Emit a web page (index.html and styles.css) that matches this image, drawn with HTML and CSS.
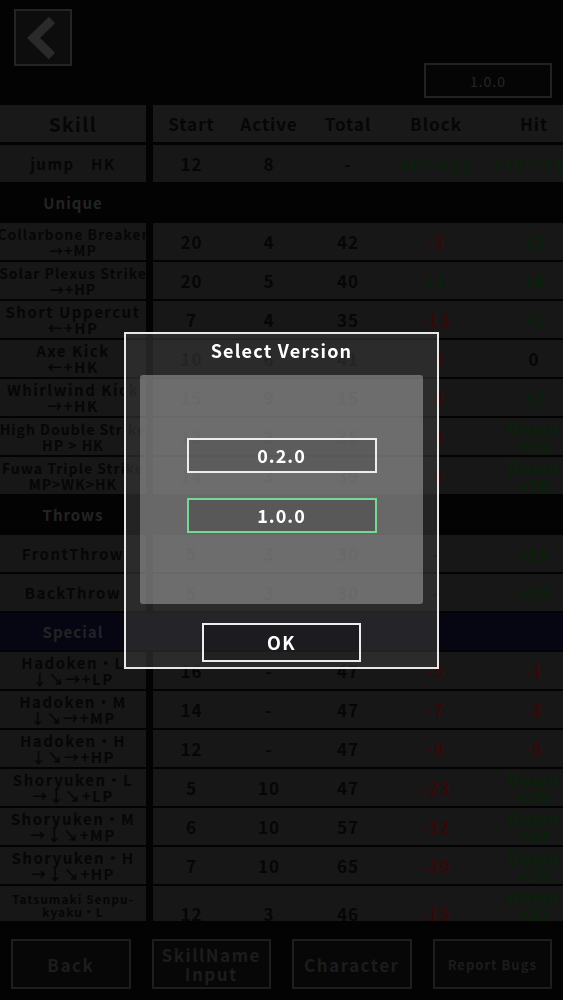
FILE: index.html
```html
<!DOCTYPE html>
<html lang="en">
<head>
<meta charset="utf-8">
<title>Frame Data</title>
<link rel="stylesheet" href="styles.css">
</head>
<body>
<div class="page">
  <header class="topbar">
    <button class="back-btn" aria-label="Back">
      <svg width="54" height="53" viewBox="0 0 54 53"><polyline points="36,9 17.5,27 36,45" fill="none" stroke="#2a2a2a" stroke-width="9" stroke-linejoin="miter"/></svg>
    </button>
    <div class="version-box">1.0.0</div>
  </header>

  <div class="table">
    <div class="row head-row">
      <div class="skill head">Skill</div>
      <div class="stats head"><span>Start</span><span>Active</span><span>Total</span><span>Block</span><span>Hit</span></div>
    </div>

    <div class="body">
      <div class="row">
        <div class="skill"><span>jump　HK</span></div>
        <div class="stats"><span>12</span><span>8</span><span>-</span><span class="g">+6～+11</span><span class="g">+10～+14</span></div>
      </div>

      <div class="section"><div class="label">Unique</div></div>

      <div class="row">
        <div class="skill sm"><span>Collarbone Breaker</span><span>→+MP</span></div>
        <div class="stats"><span>20</span><span>4</span><span>42</span><span class="r">-3</span><span class="g">+2</span></div>
      </div>
      <div class="row">
        <div class="skill sm"><span>Solar Plexus Strike</span><span>→+HP</span></div>
        <div class="stats"><span>20</span><span>5</span><span>40</span><span class="g">+1</span><span class="g">+8</span></div>
      </div>
      <div class="row">
        <div class="skill lg"><span>Short Uppercut</span><span>←+HP</span></div>
        <div class="stats"><span>7</span><span>4</span><span>35</span><span class="r">-13</span><span class="g">+1</span></div>
      </div>
      <div class="row">
        <div class="skill"><span>Axe Kick</span><span>←+HK</span></div>
        <div class="stats"><span>10</span><span>6</span><span>41</span><span class="r">-2</span><span>0</span></div>
      </div>
      <div class="row">
        <div class="skill"><span>Whirlwind Kick</span><span>→+HK</span></div>
        <div class="stats"><span>15</span><span>9</span><span>15</span><span class="r">-4</span><span class="g">+2</span></div>
      </div>
      <div class="row">
        <div class="skill sm"><span>High Double Strike</span><span>HP &gt; HK</span></div>
        <div class="stats"><span>12</span><span>3</span><span>35</span><span class="r">-4</span><span class="g">Down<br>+36</span></div>
      </div>
      <div class="row">
        <div class="skill sm"><span>Fuwa Triple Strike</span><span>MP&gt;WK&gt;HK</span></div>
        <div class="stats"><span>14</span><span>3</span><span>39</span><span class="r">-6</span><span class="g">Down<br>+36</span></div>
      </div>

      <div class="section"><div class="label">Throws</div></div>

      <div class="row">
        <div class="skill"><span>FrontThrow</span></div>
        <div class="stats"><span>5</span><span>3</span><span>30</span><span>-</span><span class="g">+19</span></div>
      </div>
      <div class="row">
        <div class="skill"><span>BackThrow</span></div>
        <div class="stats"><span>5</span><span>3</span><span>30</span><span>-</span><span class="g">+19</span></div>
      </div>

      <div class="section special"><div class="label">Special</div></div>

      <div class="row">
        <div class="skill"><span>Hadoken・L</span><span>↓↘→+LP</span></div>
        <div class="stats"><span>16</span><span>-</span><span>47</span><span class="r">-5</span><span class="r">-1</span></div>
      </div>
      <div class="row">
        <div class="skill"><span>Hadoken・M</span><span>↓↘→+MP</span></div>
        <div class="stats"><span>14</span><span>-</span><span>47</span><span class="r">-7</span><span class="r">-3</span></div>
      </div>
      <div class="row">
        <div class="skill"><span>Hadoken・H</span><span>↓↘→+HP</span></div>
        <div class="stats"><span>12</span><span>-</span><span>47</span><span class="r">-9</span><span class="r">-5</span></div>
      </div>
      <div class="row">
        <div class="skill"><span>Shoryuken・L</span><span>→↓↘+LP</span></div>
        <div class="stats"><span>5</span><span>10</span><span>47</span><span class="r">-23</span><span class="g">Down<br>+38</span></div>
      </div>
      <div class="row">
        <div class="skill"><span>Shoryuken・M</span><span>→↓↘+MP</span></div>
        <div class="stats"><span>6</span><span>10</span><span>57</span><span class="r">-32</span><span class="g">Down<br>+34</span></div>
      </div>
      <div class="row">
        <div class="skill"><span>Shoryuken・H</span><span>→↓↘+HP</span></div>
        <div class="stats"><span>7</span><span>10</span><span>65</span><span class="r">-39</span><span class="g">Down<br>+29</span></div>
      </div>
      <div class="row">
        <div class="skill xs"><span>Tatsumaki Senpu-</span><span>kyaku・L</span></div>
        <div class="stats low"><span>12</span><span>3</span><span>46</span><span class="r">-15</span><span class="g">Down<br>+32</span></div>
      </div>
    </div>
  </div>

  <footer class="bottombar">
    <button class="nav-btn">Back</button>
    <button class="nav-btn two">SkillName<br>Input</button>
    <button class="nav-btn">Character</button>
    <button class="nav-btn small">Report Bugs</button>
  </footer>
</div>

<div class="modal">
  <div class="dialog">
    <div class="dialog-title">Select Version</div>
    <div class="dialog-panel">
      <button class="ver-btn">0.2.0</button>
      <button class="ver-btn selected">1.0.0</button>
    </div>
    <button class="ok-btn">OK</button>
  </div>
</div>
</body>
</html>
```

FILE: styles.css
```css
* { box-sizing: border-box; }
html, body { margin: 0; padding: 0; }
body {
  width: 563px;
  height: 1000px;
  overflow: hidden;
  background: #030303;
  font-family: "Noto Sans CJK JP", "Noto Sans", sans-serif;
  font-weight: 700;
}
button {
  font: inherit;
  padding: 0;
  margin: 0;
  cursor: pointer;
}
.page { width: 563px; height: 1000px; overflow: hidden; }

.topbar {
  height: 105px;
  display: flex;
  justify-content: space-between;
  align-items: flex-start;
  padding: 9px 11px 0 14px;
}
.back-btn {
  width: 58px;
  height: 57px;
  border: 2px solid #242424;
  background: #0d0d0d;
  display: flex;
  align-items: center;
  justify-content: center;
}
.version-box {
  margin-top: 54px;
  width: 128px;
  height: 35px;
  border: 2px solid #222222;
  background: #050505;
  color: #262626;
  font-size: 14px;
  font-weight: 400;
  letter-spacing: 1px;
  display: flex;
  align-items: center;
  justify-content: center;
}

.table { width: 563px; overflow: hidden; }
.row { display: flex; height: 37px; width: 584px; flex: none; }
.skill {
  width: 146px;
  flex: none;
  background: #171717;
  color: #060606;
  display: flex;
  flex-direction: column;
  align-items: center;
  justify-content: center;
  overflow: hidden;
  font-size: 15px;
  line-height: 16px;
  letter-spacing: 1.5px;
}
.skill span { white-space: nowrap; }
.skill.sm { font-size: 14px; letter-spacing: 1px; }
.skill.lg { font-size: 15px; letter-spacing: 1.5px; }
.skill.xs { font-size: 12px; line-height: 13px; letter-spacing: 1px; }
.skill.head { font-size: 19px; background: #191919; letter-spacing: 1.5px; }
.stats {
  margin-left: 7px;
  width: 431px;
  flex: none;
  display: grid;
  grid-template-columns: 77px 78px 80px 96px 100px;
  align-items: center;
  text-align: center;
  background: #171717;
  color: #060606;
  font-size: 17px;
  line-height: 17px;
  letter-spacing: 1px;
}
.stats span { white-space: nowrap; }
.stats.head { background: #191919; font-size: 17px; letter-spacing: 1px; }
.stats.low { align-items: end; padding-bottom: 1px; }
.stats .r { color: #360909; }
.stats .g { color: #0a220a; }

.body {
  height: 776px;
  margin-top: 3px;
  display: flex;
  flex-direction: column;
  gap: 2px;
  overflow: hidden;
}
.section { height: 37px; flex: none; display: flex; width: 584px; }
.section.special { background: #060613; }
.section .label {
  width: 146px;
  text-align: center;
  line-height: 37px;
  color: #232323;
  font-size: 15px;
  letter-spacing: 1px;
}

.bottombar {
  height: 79px;
  display: flex;
  gap: 21px;
  padding: 18px 11px 0;
}
.nav-btn {
  flex: 1;
  height: 50px;
  border: 2px solid #1e1e1e;
  background: #070707;
  color: #1c1c1c;
  font-size: 17px;
  line-height: 19px;
  letter-spacing: 1.5px;
  display: flex;
  align-items: center;
  justify-content: center;
  text-align: center;
}
.nav-btn.small { font-size: 13px; letter-spacing: 1px; }

.modal {
  position: fixed;
  inset: 0;
  display: flex;
  align-items: center;
  justify-content: center;
}
.dialog {
  width: 315px;
  height: 337px;
  border: 2px solid #e8e8e8;
  background: rgba(56, 56, 56, 0.6);
  padding: 0 14px;
  display: flex;
  flex-direction: column;
}
.dialog-title {
  height: 41px;
  padding-top: 3px;
  line-height: 26px;
  font-size: 18px;
  color: #ffffff;
  letter-spacing: 1.2px;
  text-align: center;
}
.dialog-panel {
  height: 229px;
  background: rgba(190, 190, 190, 0.45);
  border-radius: 3px;
  display: flex;
  flex-direction: column;
  align-items: center;
  padding-top: 63px;
  gap: 25px;
}
.ver-btn {
  width: 190px;
  height: 35px;
  border: 2px solid #ededed;
  background: rgba(0, 0, 0, 0.15);
  color: #ffffff;
  font-size: 18px;
  letter-spacing: 1px;
  display: flex;
  align-items: center;
  justify-content: center;
}
.ver-btn.selected { border-color: #76d893; }
.ok-btn {
  margin-top: 19px;
  align-self: center;
  width: 159px;
  height: 39px;
  border: 2px solid #ededed;
  background: rgba(0, 0, 0, 0.22);
  color: #ffffff;
  font-size: 18px;
  letter-spacing: 1.5px;
  display: flex;
  align-items: center;
  justify-content: center;
}
```
